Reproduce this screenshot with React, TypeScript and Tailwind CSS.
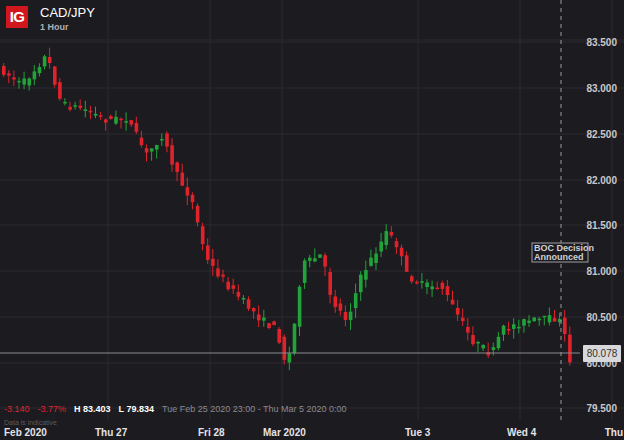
const pts: [number, number][] = [
  [0, 70], [20, 85], [45, 55], [60, 105], [80, 108], [105, 120], [125, 118], [145, 155], [160, 135],
  [175, 175], [190, 200], [205, 260], [230, 290], [260, 320], [275, 330], [285, 368], [292, 330],
  [300, 265], [320, 255], [330, 300], [345, 320], [360, 275], [375, 250], [385, 232], [395, 245],
  [405, 275], [420, 285], [440, 287], [450, 305], [470, 340], [490, 355], [500, 330], [520, 322],
  [555, 318], [561, 325], [567, 360], [572, 358],
];

function yAt(x: number) {
  if (x <= 0) return pts[0][1];
  for (let i = 0; i < pts.length - 1; i++) {
    const [x0, y0] = pts[i];
    const [x1, y1] = pts[i + 1];
    if (x >= x0 && x <= x1) return y0 + ((y1 - y0) * (x - x0)) / (x1 - x0 || 1);
  }
  return pts[pts.length - 1][1];
}

let seed = 7;
const rnd = () => {
  seed = (seed * 16807) % 2147483647;
  return seed / 2147483647;
};

const candles = Array.from({ length: 112 }, (_, i) => {
  const x = 2 + i * 5.1;
  const base = yAt(x);
  const prev = yAt(x - 5.1);
  const open = prev + (rnd() - 0.5) * 8;
  const close = base + (rnd() - 0.5) * 8;
  const hi = Math.min(open, close) - rnd() * 10;
  const lo = Math.max(open, close) + rnd() * 10;
  return { x, open, close, hi, lo };
});

const prices = [
  ["83.500", 42], ["83.000", 88], ["82.500", 134], ["82.000", 180], ["81.500", 225],
  ["81.000", 271], ["80.500", 317], ["80.000", 363], ["79.500", 408],
] as const;
const vlines = [108, 210, 282, 418, 520, 612];
const dates: [string, number][] = [["Feb 2020", 4], ["Thu 27", 95], ["Fri 28", 198], ["Mar 2020", 263], ["Tue 3", 405], ["Wed 4", 507]];

export default function App() {
  return (
    <div className="relative w-[624px] h-[440px] bg-[#1c1b20] overflow-hidden" style={{ fontFamily: "'Liberation Sans', Arial, sans-serif" }}>
      <svg width="624" height="440" className="block">
        <line x1="0" y1="40" x2="624" y2="40" stroke="#2c2b31" />
        {prices.map(([, y]) => (
          <line key={y} x1="0" y1={y} x2="624" y2={y} stroke="#2c2b31" />
        ))}
        {vlines.map((x) => (
          <line key={x} x1={x} y1="0" x2={x} y2="420" stroke="#2c2b31" />
        ))}
        {candles.map((c, i) => {
          const up = c.close < c.open;
          const col = up ? "#22a33a" : "#e0232b";
          const top = Math.min(c.open, c.close);
          const h = Math.max(1.5, Math.abs(c.open - c.close));
          return (
            <g key={i}>
              <line x1={c.x + 1.7} y1={c.hi} x2={c.x + 1.7} y2={c.lo} stroke={col} strokeWidth="1" />
              <rect x={c.x} y={top} width="3.6" height={h} fill={col} />
            </g>
          );
        })}
        <line x1="0" y1="353" x2="580" y2="353" stroke="#8a8a8e" />
        <line x1="561" y1="0" x2="561" y2="420" stroke="#9a9a9e" strokeDasharray="4 4" />
        {prices.map(([t, y]) => (
          <text key={t} x="617" y={y + 4} textAnchor="end" fontSize="10" fontWeight="bold" fill="#c8c8cc">{t}</text>
        ))}
        <rect x="583" y="345" width="38" height="17" fill="#d8d8da" rx="1" />
        <text x="602" y="357" textAnchor="middle" fontSize="10" fill="#333">80.078</text>
        <rect x="532" y="243" width="56" height="19" fill="#1c1b20" stroke="#a0a0a4" />
        <text x="534" y="251" fontSize="9" fontWeight="bold" fill="#d0d0d4">BOC Decision</text>
        <text x="534" y="260" fontSize="9" fontWeight="bold" fill="#d0d0d4">Announced</text>
        {dates.map(([t, x]) => (
          <text key={t} x={x} y="436" fontSize="10" fontWeight="bold" fill="#e4e4e8">{t}</text>
        ))}
        <text x="623" y="436" textAnchor="end" fontSize="10" fontWeight="bold" fill="#e4e4e8">Thu</text>
      </svg>
      <div className="absolute left-[6px] top-[6px] flex items-start gap-[12px]">
        <div className="w-[22px] h-[22px] bg-[#d0171d] text-white font-bold text-[15px] leading-[22px] text-center tracking-tighter">IG</div>
        <div className="flex flex-col -mt-[1px]">
          <span className="text-white text-[13px] leading-[16px]">CAD/JPY</span>
          <span className="text-[#b0b0b4] text-[9px] font-bold leading-[12px]">1 Hour</span>
        </div>
      </div>
      <div className="absolute left-[4px] top-[403px] flex gap-[8px] text-[9px] font-bold">
        <span className="text-[#e0232b] font-normal">-3.140</span>
        <span className="text-[#e0232b] font-normal">-3.77%</span>
        <span className="text-white">H 83.403</span>
        <span className="text-white">L 79.834</span>
        <span className="text-[#8a8a8e] font-normal">Tue Feb 25 2020 23:00 - Thu Mar 5 2020 0:00</span>
      </div>
      <div className="absolute left-[4px] top-[418px] text-[7px] text-[#5a5a5e]">Data is indicative</div>
    </div>
  );
}
